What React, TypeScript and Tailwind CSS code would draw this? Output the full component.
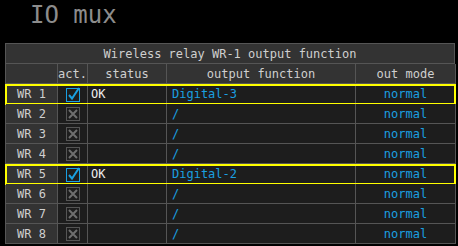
const rows = [
  { id: 1, on: true, status: "OK", fn: "Digital-3" },
  { id: 2, on: false, status: "", fn: "/" },
  { id: 3, on: false, status: "", fn: "/" },
  { id: 4, on: false, status: "", fn: "/" },
  { id: 5, on: true, status: "OK", fn: "Digital-2" },
  { id: 6, on: false, status: "", fn: "/" },
  { id: 7, on: false, status: "", fn: "/" },
  { id: 8, on: false, status: "", fn: "/" },
];

const cols = "grid grid-cols-[52px_30px_79px_189px_100px]";
const cell = "h-[20px] border-r border-b border-[#555] flex items-center";

const CheckOn = () => (
  <svg width="16" height="18" viewBox="0 0 16 18" className="mt-[1px]">
    <rect x="1.5" y="3.5" width="13" height="13" fill="none" stroke="#1a9fe0" strokeWidth="1" />
    <path d="M4 10 L7 13.5 L14 3" fill="none" stroke="#1a9fe0" strokeWidth="2" />
  </svg>
);

const CheckOff = () => (
  <svg width="16" height="16" viewBox="0 0 16 16">
    <rect x="1.5" y="1.5" width="13" height="13" fill="none" stroke="#555" strokeWidth="1" />
    <path d="M4 4 L12 12 M12 4 L4 12" fill="none" stroke="#6e6e6e" strokeWidth="2" />
  </svg>
);

export default function App() {
  return (
    <div className="w-[458px] h-[246px] bg-black font-['DejaVu_Sans_Mono',monospace] text-[12px] text-[#cfcfcf]">
      <div className="h-[43px] pl-[30px] text-[24px] leading-[30px] text-[#8c8c8c]">IO mux</div>
      <div className="ml-[5px] w-[450px] border-l border-t border-[#555]">
        <div className={`${cell} justify-center bg-[#333]`}>Wireless relay WR-1 output function</div>
        <div className={`${cols} bg-[#333]`}>
          <div className={cell}></div>
          <div className={`${cell} justify-center`}>act.</div>
          <div className={`${cell} justify-center`}>status</div>
          <div className={`${cell} justify-center`}>output function</div>
          <div className={`${cell} justify-center`}>out mode</div>
        </div>
        {rows.map((r) => (
          <div key={r.id} className={`${cols} relative bg-[#1d1d1d]`}>
            <div className={`${cell} justify-center bg-[#333]`}>WR {r.id}</div>
            <div className={`${cell} justify-center`}>{r.on ? <CheckOn /> : <CheckOff />}</div>
            <div className={`${cell} pl-[3px] text-[#eeeeee]`}>{r.status}</div>
            <div className={`${cell} pl-[5px] text-[#1a9fe0]`}>{r.fn}</div>
            <div className={`${cell} justify-center text-[#1a9fe0]`}>normal</div>
            {r.on && (
              <div className="absolute left-[-1px] right-[-1px] top-[0px] h-[21px] border-2 border-[#ffff00]" />
            )}
          </div>
        ))}
      </div>
    </div>
  );
}
